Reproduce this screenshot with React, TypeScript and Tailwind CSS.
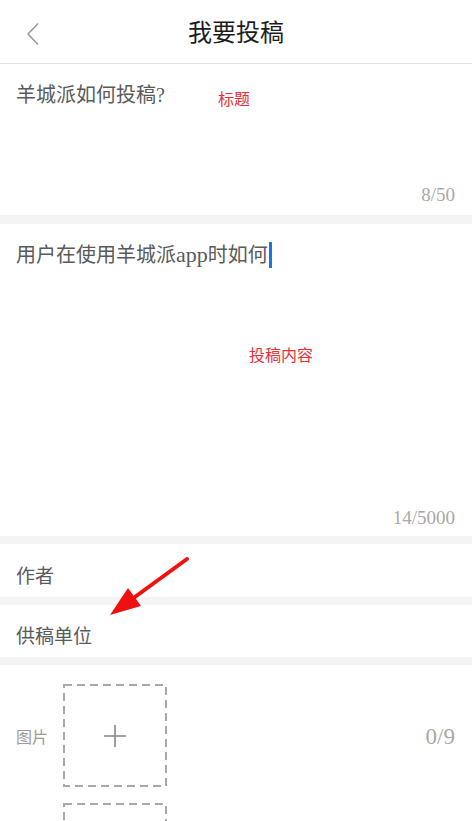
import React from "react";

const FONT = "font-['Liberation_Serif','Noto_Sans_CJK_SC',serif]";

function DashedBox({ children }: { children?: React.ReactNode }) {
  return (
    <div className="relative w-[104px] h-[103px] flex items-center justify-center">
      <svg className="absolute inset-0" width="104" height="103" viewBox="0 0 104 103">
        <rect x="1" y="1" width="102" height="101" fill="none" stroke="#a8a8a8" strokeWidth="2" strokeDasharray="8 5" />
      </svg>
      {children}
    </div>
  );
}

export default function App() {
  return (
    <div className={`relative w-[472px] h-[821px] overflow-hidden bg-white ${FONT}`}>
      {/* header */}
      <div className="relative h-[64px] border-b border-[#e4e4e4] flex items-center justify-center">
        <svg className="absolute left-[26px] top-[22px]" width="14" height="24" viewBox="0 0 14 24">
          <path d="M12 1.5 L2 12 L12 22.5" fill="none" stroke="#9a9a9a" strokeWidth="1.6" />
        </svg>
        <div className="text-[24px] text-[#1c1c1c] font-['Noto_Sans_CJK_SC',sans-serif] leading-none -mt-[2px]">我要投稿</div>
      </div>

      {/* title */}
      <div className="relative h-[151px] flex flex-col justify-between px-4 pt-[17px] pb-[8px]">
        <div className="text-[20px] leading-[28px] text-[#5a5a5a]">羊城派如何投稿?</div>
        <div className="self-end text-[19px] leading-[24px] text-[#a8a8a8] pr-[1px]">8/50</div>
        <div className="absolute left-[218px] top-[26px] text-[16px] leading-[20px] text-[#e8303a]">标题</div>
      </div>

      <div className="h-[9px] bg-[#f4f4f4]" />

      {/* content */}
      <div className="relative h-[312px] flex flex-col justify-between px-4 pt-[17px] pb-[6px]">
        <div className="flex items-center text-[20px] leading-[28px] text-[#5a5a5a]">
          用户在使用羊城派<span className="text-[22px]">app</span>时如何
          <span className="inline-block w-[3px] h-[26px] bg-[#1677e8] ml-[1px]" />
        </div>
        <div className="self-end text-[19px] leading-[24px] text-[#a8a8a8] pr-[1px]">14/5000</div>
        <div className="absolute left-[249px] top-[122px] text-[16px] leading-[20px] text-[#e8303a]">投稿内容</div>
      </div>

      <div className="h-[8px] bg-[#f4f4f4]" />

      <div className="h-[53px] flex items-center px-4 pt-[13px] text-[19px] text-[#5a5a5a]">作者</div>

      <div className="h-[8px] bg-[#f4f4f4]" />

      <div className="h-[52px] flex items-center px-4 pt-[12px] text-[19px] text-[#5a5a5a]">供稿单位</div>

      <div className="h-[8px] bg-[#f4f4f4]" />

      {/* pictures */}
      <div className="flex px-4 pt-[19px]">
        <div className="w-[47px] h-[103px] flex items-center pt-[5px] text-[16px] text-[#9a9a9a]">图片</div>
        <div className="flex flex-col gap-[16px]">
          <DashedBox>
            <svg width="22" height="22" viewBox="0 0 22 22">
              <path d="M11 0 V22 M0 11 H22" stroke="#888" strokeWidth="1.6" />
            </svg>
          </DashedBox>
          <DashedBox />
        </div>
        <div className="flex-1 h-[103px] flex items-center justify-end pt-[4px] pr-[1px] text-[23px] text-[#a8a8a8]">0/9</div>
      </div>

      {/* annotation arrow */}
      <svg className="absolute left-0 top-0 pointer-events-none" width="472" height="821" viewBox="0 0 472 821">
        <line x1="187" y1="559" x2="128" y2="602" stroke="#f01010" strokeWidth="4" strokeLinecap="round" />
        <polygon points="110,615 128,588 141,606" fill="#f01010" />
      </svg>
    </div>
  );
}
